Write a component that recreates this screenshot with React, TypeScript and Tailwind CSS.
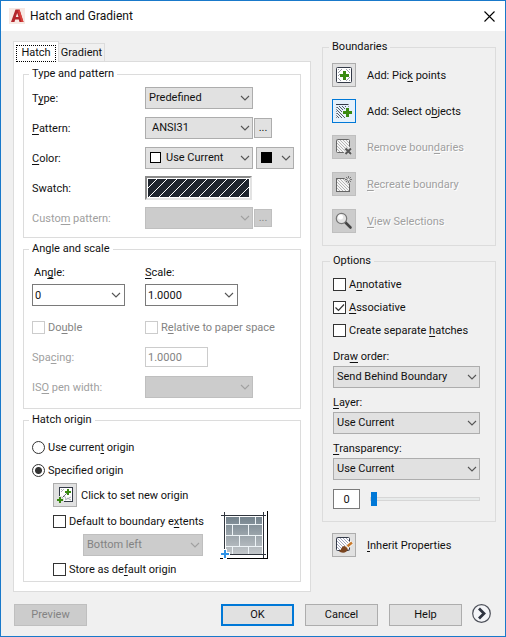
import { useState } from "react";
import type { ReactNode } from "react";

// "&" marks the access key, the way Win32 resource strings do
function Label({ text }: { text: string }) {
  const i = text.indexOf("&");
  if (i < 0) return <>{text}</>;
  return (
    <>
      {text.slice(0, i)}
      <span className="underline underline-offset-2">{text[i + 1]}</span>
      {text.slice(i + 2)}
    </>
  );
}

function Chevron({ className = "" }: { className?: string }) {
  return (
    <svg className={className} width="10" height="6" viewBox="0 0 10 6" fill="none">
      <path d="M1 1l4 4 4-4" stroke="currentColor" strokeWidth="1.1" />
    </svg>
  );
}

function Group({ title, className = "", children }: { title: string; className?: string; children: ReactNode }) {
  return (
    <fieldset className={`min-w-0 border border-[#dcdcdc] ${className}`}>
      <legend className="-ml-[3px] px-[3px] leading-4">{title}</legend>
      {children}
    </fieldset>
  );
}

type SelectProps = { id: string; label?: string; value: string; disabled?: boolean; className?: string; pad?: string; children?: ReactNode };

function Select({ id, label, value, disabled, className = "w-[108px]", pad = "pl-[3px]", children }: SelectProps) {
  return (
    <div className={`relative ${className}`}>
      <select
        id={id}
        aria-label={label}
        disabled={disabled}
        className={`block h-[22px] w-full appearance-none border pr-4 leading-4 opacity-100 ${pad} ${
          disabled ? "border-[#bfbfbf] bg-[#cccccc] text-[#838383]" : "border-[#adadad] bg-[#e1e1e1]"
        }`}
      >
        <option>{value}</option>
      </select>
      {children}
      <Chevron className={`pointer-events-none absolute right-[3px] top-2 ${disabled ? "text-[#a0a0a0]" : "text-[#555]"}`} />
    </div>
  );
}

function Combo({ id, value }: { id: string; value: string }) {
  return (
    <div className="flex h-[22px] w-[93px] items-center border border-[#7a7a7a] bg-white">
      <input id={id} defaultValue={value} className="h-full w-0 flex-1 pl-[2px] outline-none" />
      <button aria-label="Show values" className="flex h-full w-[17px] items-center justify-center text-[#555]">
        <Chevron />
      </button>
    </div>
  );
}

type CheckProps = { id: string; text: string; checked?: boolean; disabled?: boolean };

function Check({ id, text, checked = false, disabled }: CheckProps) {
  const [on, setOn] = useState(checked);
  return (
    <div className={`flex h-4 items-center gap-[3px] ${disabled ? "text-[#838383]" : ""}`}>
      <span className="relative flex">
        <input
          id={id}
          type="checkbox"
          checked={on}
          disabled={disabled}
          onChange={(e) => setOn(e.target.checked)}
          className={`size-[13px] appearance-none border bg-white ${disabled ? "border-[#cccccc]" : "border-[#333]"}`}
        />
        {on && (
          <svg className="pointer-events-none absolute inset-0" width="13" height="13" viewBox="0 0 13 13" fill="none">
            <path d="M2.5 6.5l3 3 5.5-6" stroke="#333" strokeWidth="1.2" />
          </svg>
        )}
      </span>
      <label htmlFor={id} className="whitespace-nowrap pt-[2px]"><Label text={text} /></label>
    </div>
  );
}

function Radio({ id, text, checked }: { id: string; text: string; checked?: boolean }) {
  return (
    <div className="flex h-4 items-center gap-[3px]">
      <input
        id={id}
        type="radio"
        name="origin"
        defaultChecked={checked}
        className="size-[13px] appearance-none rounded-full border border-[#333] bg-white checked:bg-[radial-gradient(circle,#333_0_3px,#fff_4px)]"
      />
      <label htmlFor={id} className="pt-[2px]"><Label text={text} /></label>
    </div>
  );
}

type IconButtonProps = { id: string; text: string; active?: boolean; disabled?: boolean; gap?: string; children: ReactNode };

function IconButton({ id, text, active, disabled, gap = "gap-[11px]", children }: IconButtonProps) {
  const skin = active
    ? "border-[#0078d7] bg-[#e5f1fb]"
    : disabled
      ? "border-[#bfbfbf] bg-[#cccccc]"
      : "border-[#adadad] bg-[#e1e1e1]";
  return (
    <div className={`flex items-center ${gap}`}>
      <button id={id} disabled={disabled} aria-label={text.replace("&", "")} className={`size-6 shrink-0 border ${skin}`}>
        <svg className="-m-px" width="24" height="24" viewBox="0 0 24 24" fill="none">{children}</svg>
      </button>
      <label htmlFor={id} className={`whitespace-nowrap pt-[2px] ${disabled ? "text-[#a0a0a0] [text-shadow:1px_1px_0_#fff]" : ""}`}>
        <Label text={text} />
      </label>
    </div>
  );
}

const hatchLines = "M5 15l3 3M5 12l6 6M5 9l9 9M5 6l12 12M8 6l9 9M11 6l6 6M14 6l3 3";

function Plus({ x, y, r, w }: { x: number; y: number; r: number; w: number }) {
  return <path d={`M${x - r} ${y}h${r * 2}M${x} ${y - r}v${r * 2}`} stroke="#3a8a12" strokeWidth={w} shapeRendering="crispEdges" />;
}

function PickIcon() {
  return (
    <>
      <rect x="4.5" y="4.5" width="15" height="15" rx="1" fill="#fff" stroke="#343a48" />
      <path d="M6 10l4-4M6 13l2-2M6 7l1-1M14 6l4 4M17 6l1 1M6 15l3 3M18 14l-4 4M18 17l-1 1" stroke="#9aa0a8" />
      <Plus x={12.5} y={12.5} r={4.5} w={3} />
    </>
  );
}

function SelectIcon() {
  return (
    <>
      <path d="M5 17l2 2M5 14l5 5M5 11l8 8M5 8l11 11M7 7l11 11M10 7l7 7M13 7l4 4" stroke="#555b66" />
      <path d="M4 5.5h13" stroke="#343a48" shapeRendering="crispEdges" />
      <path d="M4.5 8v11M16.5 5v4" stroke="#8d929b" strokeDasharray="1 1" />
      <path d="M10 13.5h11M15.5 8v11" stroke="#e5f1fb" strokeWidth="5" />
      <Plus x={15.5} y={13.5} r={4.5} w={3} />
    </>
  );
}

function RemoveIcon() {
  return (
    <>
      <rect x="4.5" y="4.5" width="13" height="13" rx="1" fill="#f5f5f5" stroke="#666" />
      <path d={hatchLines} stroke="#b5b5b5" transform="translate(0 -1)" />
      <path d="M13 13l6 6M19 13l-6 6" stroke="#ddd" strokeWidth="4" />
      <path d="M13.5 13.5l5.5 5.5M19 13.5l-5.5 5.5" stroke="#555" strokeWidth="2" />
    </>
  );
}

function RecreateIcon() {
  return (
    <>
      <rect x="4.5" y="6.5" width="13" height="13" fill="#f5f5f5" stroke="#666" />
      <path d={hatchLines} stroke="#b5b5b5" transform="translate(0 1)" />
      <circle cx="16.5" cy="7.5" r="4" fill="#ccc" />
      <path d="M16.5 4v7M13 7.5h7M14 5l5 5M19 5l-5 5" stroke="#777" />
      <circle cx="16.5" cy="7.5" r="1.2" fill="#eee" />
    </>
  );
}

function ViewIcon() {
  return (
    <>
      <path d="M13.5 13.5l5 5" stroke="#444" strokeWidth="2.6" strokeLinecap="round" />
      <circle cx="9.5" cy="9.5" r="5.2" fill="#e4e4e4" stroke="#777" strokeWidth="1.2" />
      <circle cx="8.5" cy="8" r="2.5" fill="#fff" />
    </>
  );
}

function OriginIcon() {
  return (
    <>
      <rect x="6.5" y="4.5" width="13" height="14" fill="#fff" stroke="#343a48" />
      <path d="M8 9l3-3M8 7l1-1M12 17l6-3M14 15l4 2M11 12l2 4" stroke="#aab0b6" />
      <path d="M8 16l7-7" stroke="#343a48" strokeDasharray="2 1" />
      <path d="M3 17h8M7 13v8" stroke="#e1e1e1" strokeWidth="4" />
      <Plus x={7} y={17} r={3} w={2} />
      <Plus x={15} y={9} r={3} w={2} />
    </>
  );
}

function InheritIcon() {
  return (
    <>
      <rect x="4.5" y="4.5" width="13" height="13" rx="1" fill="#fff" stroke="#343a48" />
      <path d={hatchLines} stroke="#a3a9c0" transform="translate(0 -1)" />
      <path d="M20 9l-6 6" stroke="#fff" strokeWidth="4" />
      <path d="M20 9.5l-6 5" stroke="#c87a2c" strokeWidth="2.5" />
      <path d="M14 12.5l2.5 3" stroke="#eee" strokeWidth="1.2" />
      <path d="M12.5 13c-3.5 0-2.5 4-5.5 5 2 2.5 8 2.5 9-2z" fill="#7a4520" />
    </>
  );
}

function BrickPreview() {
  return (
    <svg className="shrink-0" width="50" height="50" viewBox="0 0 50 50" fill="none" aria-hidden="true">
      <defs>
        <linearGradient id="brick" x1="0" y1="0" x2="0" y2="1">
          <stop offset="0" stopColor="#74838d" />
          <stop offset="1" stopColor="#c3c7ca" />
        </linearGradient>
      </defs>
      <rect x="6" y="6" width="36" height="37" fill="url(#brick)" />
      <g shapeRendering="crispEdges">
        <path d="M6 13.5h36M6 24.5h36M6 35.5h36M19.5 6v7M35.5 6v7M12.5 14v10M28.5 14v10M19.5 25v10M35.5 25v10M12.5 36v7M28.5 36v7" stroke="#edf3f6" />
        <path d="M1 4.5h45M4.5 1v41M43.5 1v46M8 43.5h38" stroke="#30353d" />
        <path d="M47.5 0v48M0 47.5h48" stroke="#000" />
        <path d="M0 43h10M5 38v10" stroke="#fff" strokeWidth="4" />
        <path d="M1 43h8M5 39v8" stroke="#3093e6" strokeWidth="2" />
      </g>
    </svg>
  );
}

function Swatch() {
  return (
    <button aria-label="Swatch" className="h-6 w-[107px] border-2 border-b-[#e3e3e3] border-l-[#8a8a8a] border-r-[#e3e3e3] border-t-[#8a8a8a] bg-white p-px">
      <svg className="block h-full w-full bg-[#1f252e]" viewBox="0 0 101 18" preserveAspectRatio="none">
        {[-9, 1, 11, 21, 31, 41, 51, 61, 71, 81, 91].map((x) => (
          <path key={x} d={`M${x} 18l18-18`} stroke="#fff" strokeWidth="1" />
        ))}
      </svg>
    </button>
  );
}

function Row({ id, text, disabled, children }: { id: string; text: string; disabled?: boolean; children: ReactNode }) {
  return (
    <div className="flex h-6 items-center">
      <label htmlFor={id} className={`w-[113px] shrink-0 pt-[2px] ${disabled ? "text-[#a0a0a0]" : ""}`}><Label text={text} /></label>
      {children}
    </div>
  );
}

const pushButton = "h-[22px] w-[73px] border border-[#adadad] bg-[#e1e1e1]";

export default function App() {
  const [transparency, setTransparency] = useState(0);

  return (
    <div className="flex min-h-screen flex-col border border-[#1979ca] bg-[#f0f0f0] font-['Roboto','Liberation_Sans',sans-serif] text-[11px] leading-4 text-[#111]">
      <header className="flex h-[30px] items-center bg-white pl-2 pr-[10px]">
        <svg width="16" height="16" viewBox="0 0 16 16" aria-hidden="true">
          <rect width="16" height="16" fill="#f7e9e4" />
          <path d="M2 14L6.5 1.5h4L14.5 14h-4l-.7-2.5H6.2L5.5 14z" fill="#b3262c" />
          <path d="M8.2 5l1.3 4H6.8z" fill="#f7e9e4" />
          <path d="M10.5 1.5L14.5 14h-2L9 3z" fill="#d9413b" />
        </svg>
        <h1 className="ml-[5px] flex-1 text-[12px]">Hatch and Gradient</h1>
        <button aria-label="Close">
          <svg width="11" height="11" viewBox="0 0 11 11"><path d="M.5.5l10 10M10.5.5l-10 10" stroke="#000" strokeWidth="1.1" /></svg>
        </button>
      </header>

      <main className="flex flex-1 gap-[11px] pl-3 pr-[9px] pt-2">
        <div className="min-w-0 flex-1">
          <div role="tablist" className="flex h-[22px] items-end">
            <button role="tab" aria-selected="true" className="z-10 -mb-px h-[21px] w-[46px] border border-b-0 border-[#dcdcdc] bg-white p-[2px] pb-0">
              <span className="block h-[17px] border border-dotted border-black leading-[13px]">Hatch</span>
            </button>
            <button role="tab" aria-selected="false" className="h-[18px] w-[46px] border border-b-0 border-l-0 border-[#dcdcdc]">Gradient</button>
          </div>

          <div className="flex flex-col gap-[3px] border border-[#dcdcdc] bg-white px-[9px] pb-[9px] pt-1">
            <Group title="Type and pattern" className="pb-[7px] pl-2">
              <div className="flex flex-col gap-[6px] pt-1">
                <Row id="type" text="T&ype:"><Select id="type" value="Predefined" /></Row>
                <Row id="pattern" text="&Pattern:">
                  <Select id="pattern" value="ANSI31" pad="pl-[6px]" />
                  <button aria-label="Browse patterns" className="ml-px h-5 w-[18px] border border-[#adadad] bg-[#e1e1e1]">...</button>
                </Row>
                <Row id="color" text="&Color:">
                  <Select id="color" value="Use Current" pad="pl-[20px]">
                    <span className="pointer-events-none absolute left-[5px] top-[5px] size-[11px] border border-black bg-white" />
                  </Select>
                  <Select id="bgcolor" label="Background color" value="" className="ml-[3px] w-[38px]">
                    <span className="pointer-events-none absolute left-[5px] top-[5px] size-[11px] bg-black" />
                  </Select>
                </Row>
                <Row id="swatch" text="Swatch:"><Swatch /></Row>
                <Row id="custom" text="Custo&m pattern:" disabled>
                  <Select id="custom" value="" disabled />
                  <button disabled aria-label="Browse custom patterns" className="ml-px h-[18px] w-[18px] border border-[#bfbfbf] bg-[#ccc] leading-3 text-[#838383]">...</button>
                </Row>
              </div>
            </Group>

            <Group title="Angle and scale" className="pb-[9px] pl-2">
              <div className="grid grid-cols-[113px_1fr] items-center pt-2">
                <label htmlFor="angle" className="pl-[2px]"><Label text="An&gle:" /></label>
                <label htmlFor="scale"><Label text="&Scale:" /></label>
                <div className="pb-[13px] pt-[3px]"><Combo id="angle" value="0" /></div>
                <div className="pb-[13px] pt-[3px]"><Combo id="scale" value="1.0000" /></div>
                <Check id="double" text="Do&uble" disabled />
                <Check id="relative" text="R&elative to paper space" disabled />
              </div>
              <div className="flex flex-col gap-[6px] pt-[10px]">
                <Row id="spacing" text="Spa&cing:" disabled>
                  <input id="spacing" defaultValue="1.0000" disabled className="h-5 w-[63px] border border-[#ccc] bg-white pl-[2px] text-[#838383]" />
                </Row>
                <Row id="iso" text="IS&O pen width:" disabled><Select id="iso" value="" disabled /></Row>
              </div>
            </Group>

            <Group title="Hatch origin" className="pb-1 pl-2">
              <div className="flex flex-col gap-[7px] pt-[11px]">
                <Radio id="current" text="Use curren&t origin" />
                <Radio id="specified" text="Specified origin" checked />
              </div>
              <div className="flex items-end gap-[16px] pl-[21px] pt-[5px]">
                <div className="flex flex-col gap-[6px]">
                  <IconButton id="neworigin" text="Click to set new origin" gap="gap-1"><OriginIcon /></IconButton>
                  <Check id="extents" text="Default to boundary e&xtents" />
                  <div className="-my-px pl-[30px]"><Select id="corner" label="Boundary corner" value="Bottom left" disabled className="w-[120px]" /></div>
                  <Check id="store" text="Store as de&fault origin" />
                </div>
                <div className="pb-4"><BrickPreview /></div>
              </div>
            </Group>
          </div>
        </div>

        <div className="w-[174px] shrink-0">
          <Group title="Boundaries" className="pb-3 pl-[9px]">
            <div className="flex flex-col gap-3 pt-2">
              <IconButton id="pick" text="Add: Pic&k points"><PickIcon /></IconButton>
              <IconButton id="objects" text="Add: Select o&bjects" active><SelectIcon /></IconButton>
              <IconButton id="remove" text="Remove boun&daries" disabled><RemoveIcon /></IconButton>
            </div>
            <div className="flex flex-col gap-[13px] pt-[13px]">
              <IconButton id="recreate" text="&Recreate boundary" disabled><RecreateIcon /></IconButton>
              <IconButton id="view" text="&View Selections" disabled><ViewIcon /></IconButton>
            </div>
          </Group>

          <Group title="Options" className="mt-[7px] pb-3 pl-[10px] pr-[15px]">
            <div className="flex flex-col gap-[7px] pt-[7px]">
              <Check id="annotative" text="A&nnotative" />
              <Check id="associative" text="&Associative" checked />
              <Check id="separate" text="Create separate &hatches" />
            </div>
            <div className="flex flex-col gap-[7px] pt-[11px]">
              <div className="flex flex-col gap-px">
                <label htmlFor="order"><Label text="Dra&w order:" /></label>
                <Select id="order" value="Send Behind Boundary" className="w-full" />
              </div>
              <div className="flex flex-col gap-px">
                <label htmlFor="layer"><Label text="&Layer:" /></label>
                <Select id="layer" value="Use Current" className="w-full" />
              </div>
              <div className="flex flex-col gap-px">
                <label htmlFor="transparency"><Label text="&Transparency:" /></label>
                <Select id="transparency" value="Use Current" className="w-full" />
              </div>
            </div>
            <div className="flex items-center gap-[10px] pt-[9px]">
              <input
                aria-label="Transparency value"
                value={transparency}
                onChange={(e) => setTransparency(Number(e.target.value) || 0)}
                className="h-5 w-[27px] border border-[#7a7a7a] bg-white text-center"
              />
              <input
                type="range"
                aria-label="Transparency slider"
                min={0}
                max={90}
                value={transparency}
                onChange={(e) => setTransparency(Number(e.target.value))}
                className="h-[14px] w-0 flex-1 appearance-none bg-transparent [&::-webkit-slider-runnable-track]:h-1 [&::-webkit-slider-runnable-track]:border [&::-webkit-slider-runnable-track]:border-[#d6d6d6] [&::-webkit-slider-runnable-track]:bg-[#e7eaea] [&::-webkit-slider-thumb]:-mt-[6px] [&::-webkit-slider-thumb]:h-[14px] [&::-webkit-slider-thumb]:w-[6px] [&::-webkit-slider-thumb]:appearance-none [&::-webkit-slider-thumb]:bg-[#0078d7]"
              />
            </div>
          </Group>

          <div className="pl-[10px] pt-[11px]">
            <IconButton id="inherit" text="&Inherit Properties"><InheritIcon /></IconButton>
          </div>
        </div>
      </main>

      <footer className="flex items-start gap-[11px] pb-[10px] pl-[13px] pr-[14px] pt-[10px]">
        <button disabled className="mr-auto h-[22px] w-[73px] border border-[#bfbfbf] bg-[#ccc] text-[#838383]">Preview</button>
        <button className="h-[22px] w-[73px] border-2 border-[#0078d7] bg-[#e1e1e1]">OK</button>
        <button className={pushButton}>Cancel</button>
        <button className={pushButton}>Help</button>
        <button aria-label="More options" className="-ml-px">
          <svg width="19" height="19" viewBox="0 0 19 19" fill="none">
            <circle cx="9.5" cy="9.5" r="8.8" fill="#f4f5f8" stroke="#4d5059" strokeWidth="1.2" />
            <path d="M7 4.5l5 5-5 5" stroke="#2f3440" strokeWidth="2.8" />
          </svg>
        </button>
      </footer>
    </div>
  );
}
